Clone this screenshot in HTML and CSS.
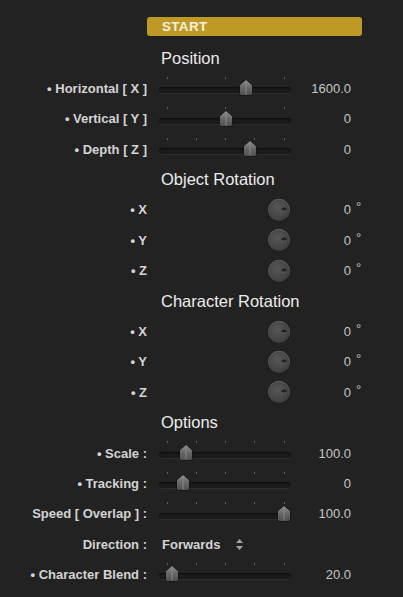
FILE: index.html
```html
<!DOCTYPE html>
<html>
<head>
<meta charset="utf-8">
<link rel="stylesheet" href="styles.css">
</head>
<body>
<div class="panel">
  <div class="start">START</div>
  <div class="rows">
    <div class="heading">Position</div>

    <div class="row">
      <div class="label">• Horizontal [ X ]</div>
      <div class="control slider">
        <div class="ticks"><i></i><i></i><i></i></div>
        <div class="track"></div>
        <svg class="thumb" style="left: calc(65.9% - 7px)" width="14" height="17" viewBox="0 0 14 17"><use href="#thumb"/></svg>
      </div>
      <div class="value">1600.0</div>
    </div>

    <div class="row">
      <div class="label">• Vertical [ Y ]</div>
      <div class="control slider">
        <div class="ticks"><i></i><i></i><i></i></div>
        <div class="track"></div>
        <svg class="thumb" style="left: calc(50.8% - 7px)" width="14" height="17" viewBox="0 0 14 17"><use href="#thumb"/></svg>
      </div>
      <div class="value">0</div>
    </div>

    <div class="row">
      <div class="label">• Depth [ Z ]</div>
      <div class="control slider">
        <div class="ticks"><i></i><i></i><i></i><i></i><i></i></div>
        <div class="track"></div>
        <svg class="thumb" style="left: calc(68.9% - 7px)" width="14" height="17" viewBox="0 0 14 17"><use href="#thumb"/></svg>
      </div>
      <div class="value">0</div>
    </div>

    <div class="heading">Object Rotation</div>

    <div class="row">
      <div class="label">• X</div>
      <div class="control dial"><svg width="24" height="24" viewBox="0 0 24 24"><use href="#knob"/></svg></div>
      <div class="value">0</div><div class="unit">°</div>
    </div>
    <div class="row">
      <div class="label">• Y</div>
      <div class="control dial"><svg width="24" height="24" viewBox="0 0 24 24"><use href="#knob"/></svg></div>
      <div class="value">0</div><div class="unit">°</div>
    </div>
    <div class="row">
      <div class="label">• Z</div>
      <div class="control dial"><svg width="24" height="24" viewBox="0 0 24 24"><use href="#knob"/></svg></div>
      <div class="value">0</div><div class="unit">°</div>
    </div>

    <div class="heading">Character Rotation</div>

    <div class="row">
      <div class="label">• X</div>
      <div class="control dial"><svg width="24" height="24" viewBox="0 0 24 24"><use href="#knob"/></svg></div>
      <div class="value">0</div><div class="unit">°</div>
    </div>
    <div class="row">
      <div class="label">• Y</div>
      <div class="control dial"><svg width="24" height="24" viewBox="0 0 24 24"><use href="#knob"/></svg></div>
      <div class="value">0</div><div class="unit">°</div>
    </div>
    <div class="row">
      <div class="label">• Z</div>
      <div class="control dial"><svg width="24" height="24" viewBox="0 0 24 24"><use href="#knob"/></svg></div>
      <div class="value">0</div><div class="unit">°</div>
    </div>

    <div class="heading">Options</div>

    <div class="row">
      <div class="label">• Scale :</div>
      <div class="control slider">
        <div class="ticks"><i></i><i></i><i></i><i></i><i></i></div>
        <div class="track"></div>
        <svg class="thumb" style="left: calc(20.5% - 7px)" width="14" height="17" viewBox="0 0 14 17"><use href="#thumb"/></svg>
      </div>
      <div class="value">100.0</div>
    </div>

    <div class="row">
      <div class="label">• Tracking :</div>
      <div class="control slider">
        <div class="ticks"><i></i><i></i><i></i><i></i><i></i></div>
        <div class="track"></div>
        <svg class="thumb" style="left: calc(18.2% - 7px)" width="14" height="17" viewBox="0 0 14 17"><use href="#thumb"/></svg>
      </div>
      <div class="value">0</div>
    </div>

    <div class="row">
      <div class="label">Speed [ Overlap ] :</div>
      <div class="control slider">
        <div class="ticks"><i></i><i></i><i></i><i></i><i></i></div>
        <div class="track"></div>
        <svg class="thumb" style="left: calc(94.7% - 7px)" width="14" height="17" viewBox="0 0 14 17"><use href="#thumb"/></svg>
      </div>
      <div class="value">100.0</div>
    </div>

    <div class="row">
      <div class="label">Direction :</div>
      <div class="control popup">
        <span class="popup-text">Forwards</span>
        <svg class="updown" width="7" height="11" viewBox="0 0 7 11"><path d="M3.5 0 L7 4 L0 4 Z M0 7 L7 7 L3.5 11 Z" fill="#a2a2a2"/></svg>
      </div>
      <div class="value"></div>
    </div>

    <div class="row">
      <div class="label">• Character Blend :</div>
      <div class="control slider">
        <div class="ticks"><i></i><i></i><i></i><i></i><i></i></div>
        <div class="track"></div>
        <svg class="thumb" style="left: calc(9.8% - 7px)" width="14" height="17" viewBox="0 0 14 17"><use href="#thumb"/></svg>
      </div>
      <div class="value">20.0</div>
    </div>
  </div>
</div>

<svg class="defs" width="0" height="0">
  <defs>
    <linearGradient id="thumbGrad" x1="0" y1="0" x2="0" y2="1">
      <stop offset="0" stop-color="#8e8e8e"/>
      <stop offset="0.5" stop-color="#686868"/>
      <stop offset="1" stop-color="#4e4e4e"/>
    </linearGradient>
    <radialGradient id="knobGrad" cx="0.45" cy="0.4" r="0.65">
      <stop offset="0" stop-color="#575757"/>
      <stop offset="0.75" stop-color="#444444"/>
      <stop offset="1" stop-color="#363636"/>
    </radialGradient>
    <linearGradient id="rimGrad" x1="0" y1="0" x2="0" y2="1">
      <stop offset="0" stop-color="#6c6c6c"/>
      <stop offset="1" stop-color="#3a3a3a"/>
    </linearGradient>
    <g id="thumb">
      <path d="M7 0.5 L13.5 6 L13.5 14.5 Q13.5 16.5 11.5 16.5 L2.5 16.5 Q0.5 16.5 0.5 14.5 L0.5 6 Z" fill="url(#thumbGrad)" stroke="#161616" stroke-width="1"/>
      <path d="M7 2 L7 15.5" stroke="#909090" stroke-width="0.8"/>
    </g>
    <g id="knob">
      <circle cx="12" cy="12" r="11.6" fill="#141414"/>
      <circle cx="12" cy="12" r="10.8" fill="url(#knobGrad)" stroke="url(#rimGrad)" stroke-width="0.8"/>
      <ellipse cx="17" cy="11.2" rx="2.7" ry="1.7" fill="#232323"/>
      <path d="M14.5 12.6 Q17 13.9 19.6 12.6" stroke="#666666" stroke-width="0.7" fill="none"/>
    </g>
  </defs>
</svg>
</body>
</html>
```

FILE: styles.css
```css
html, body {
  margin: 0;
  padding: 0;
  background: #222222;
}

body {
  font-family: "Liberation Sans", Arial, sans-serif;
  width: 403px;
  height: 597px;
  overflow: hidden;
}

.panel {
  padding-top: 17px;
}

.start {
  margin-left: 147px;
  width: 215px;
  height: 19px;
  box-sizing: border-box;
  padding-left: 15px;
  background: #be9926;
  border-radius: 3px;
  color: #f5efdf;
  font-weight: bold;
  font-size: 13.5px;
  line-height: 20px;
  letter-spacing: 0.3px;
}

.rows {
  margin-top: 6.8px;
}

.heading {
  height: 30.4px;
  line-height: 30.4px;
  padding-left: 161px;
  font-size: 16.5px;
  color: #ececec;
}

.row {
  display: grid;
  grid-template-columns: 147px 144px 60px 1fr;
  height: 30.4px;
  align-items: center;
}

.label {
  text-align: right;
  font-size: 13px;
  font-weight: bold;
  color: #d4d4d4;
  white-space: nowrap;
}

.value {
  text-align: right;
  font-size: 13px;
  color: #c6c6c6;
}

.unit {
  font-size: 13px;
  color: #c6c6c6;
  padding-left: 5px;
  position: relative;
  top: -3px;
}

.control {
  margin-left: 12px;
  height: 30.4px;
}

.slider {
  position: relative;
}

.ticks {
  position: absolute;
  top: 3.6px;
  left: 7.5px;
  right: 6.5px;
  display: flex;
  justify-content: space-between;
}

.ticks i {
  display: block;
  width: 1px;
  height: 2px;
  background: #5e5e5e;
}

.track {
  position: absolute;
  top: 14px;
  left: 0;
  right: 0;
  height: 6px;
  border-radius: 3px;
  background: #1a1a1a;
  box-shadow: inset 0 1px 1px #0e0e0e, 0 1px 0 #2d2d2d;
}

.thumb {
  position: absolute;
  top: 6px;
  display: block;
}

.dial {
  display: flex;
  align-items: center;
  justify-content: flex-end;
}

.dial svg {
  display: block;
}

.popup {
  display: flex;
  align-items: center;
  padding-left: 3px;
  box-sizing: border-box;
}

.popup-text {
  font-size: 13px;
  font-weight: bold;
  color: #d4d4d4;
  width: 74px;
}

.updown {
  display: block;
}

.defs {
  position: absolute;
  width: 0;
  height: 0;
}
```
